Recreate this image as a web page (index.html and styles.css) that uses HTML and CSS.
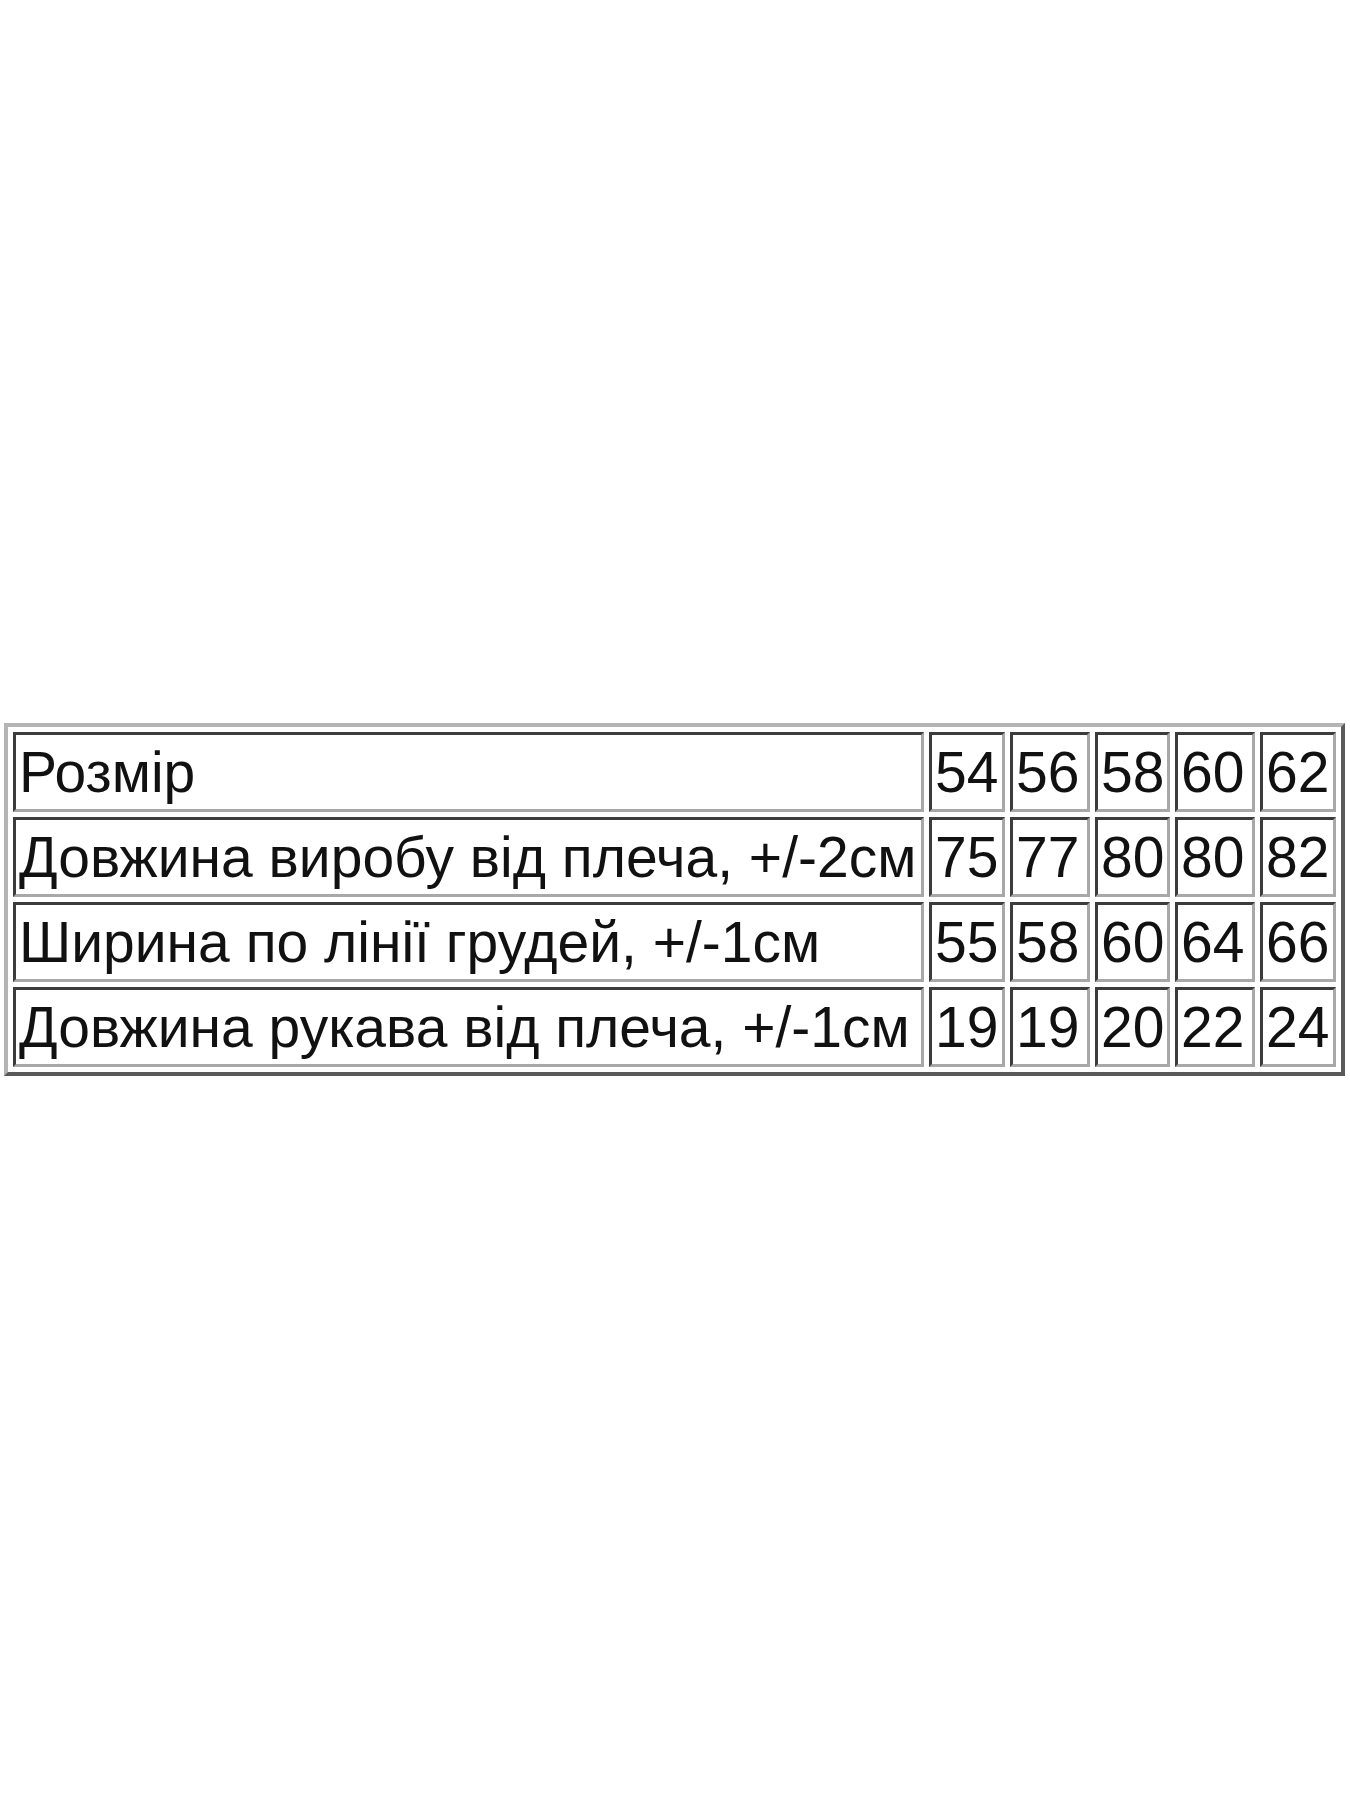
FILE: index.html
```html
<!DOCTYPE html>
<html lang="uk">
<head>
<meta charset="utf-8">
<title>Розмірна сітка</title>
<link rel="stylesheet" href="styles.css">
</head>
<body>
<main class="page">
  <table class="sizes">
    <colgroup>
      <col class="c-label">
      <col class="c-54">
      <col class="c-56">
      <col class="c-58">
      <col class="c-60">
      <col class="c-62">
    </colgroup>
    <tbody>
      <tr><td>Розмір</td><td>54</td><td>56</td><td>58</td><td>60</td><td>62</td></tr>
      <tr><td>Довжина виробу від плеча, +/-2см</td><td>75</td><td>77</td><td>80</td><td>80</td><td>82</td></tr>
      <tr><td>Ширина по лінії грудей, +/-1см</td><td>55</td><td>58</td><td>60</td><td>64</td><td>66</td></tr>
      <tr><td>Довжина рукава від плеча, +/-1см</td><td>19</td><td>19</td><td>20</td><td>22</td><td>24</td></tr>
    </tbody>
  </table>
</main>
</body>
</html>
```

FILE: styles.css
```css
html, body {
  margin: 0;
  padding: 0;
  background: #ffffff;
}

.page {
  width: 1350px;
  height: 1800px;
  padding-top: 723px;
  padding-left: 4px;
  box-sizing: border-box;
}

.sizes {
  table-layout: fixed;
  width: 1341px;
  border-collapse: separate;
  border-spacing: 5px;
  border-style: solid;
  border-width: 4px;
  border-color: #b4b4b4 #5a5a5a #5a5a5a #b4b4b4;
  font-family: "Liberation Sans", Arial, sans-serif;
  font-size: 57px;
  color: #111111;
}

.c-label { width: 911px; }
.c-54 { width: 76px; }
.c-56 { width: 80px; }
.c-58 { width: 75px; }
.c-60 { width: 80px; }
.c-62 { width: 76px; }

.sizes td {
  height: 74px;
  padding: 0 2px 0 3px;
  border-style: solid;
  border-width: 3px;
  border-color: #3c3c3c #a8a8a8 #a8a8a8 #3c3c3c;
  text-align: left;
  vertical-align: middle;
  white-space: nowrap;
  overflow: hidden;
  line-height: 64px;
}
```
